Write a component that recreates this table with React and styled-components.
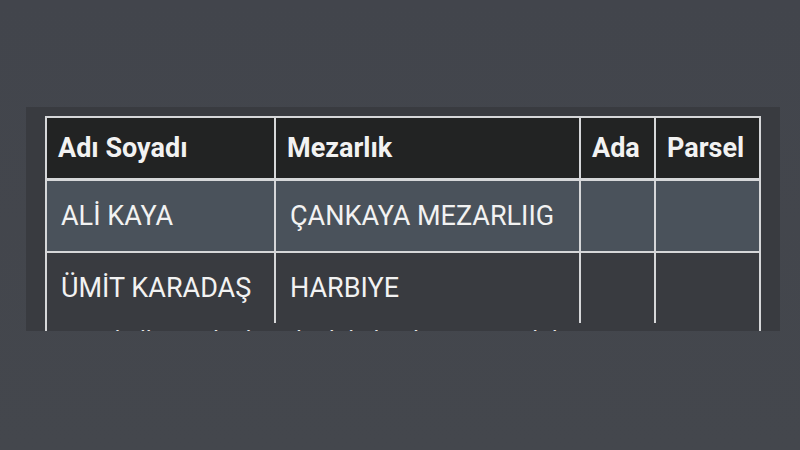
import React from "react";
import styled, { createGlobalStyle } from "styled-components";

const rows = [
  { name: "ALİ KAYA", cemetery: "ÇANKAYA MEZARLIIG", ada: "", parsel: "", highlight: true },
  { name: "ÜMİT KARADAŞ", cemetery: "HARBIYE", ada: "", parsel: "" },
];

export default function App() {
  return (
    <>
      <GlobalStyle />
      <Page>
        <Panel>
          <TableFrame>
            <Table>
              <colgroup>
                <col style={{ width: 228 }} />
                <col style={{ width: 305 }} />
                <col style={{ width: 75 }} />
                <col />
              </colgroup>
              <thead>
                <tr>
                  <Th>Adı Soyadı</Th>
                  <Th>Mezarlık</Th>
                  <Th>Ada</Th>
                  <Th>Parsel</Th>
                </tr>
              </thead>
              <tbody>
                {rows.map((r, i) => (
                  <Row key={i} $highlight={r.highlight} $divider={i > 0}>
                    <Td>{r.name}</Td>
                    <Td>{r.cemetery}</Td>
                    <Td>{r.ada}</Td>
                    <Td>{r.parsel}</Td>
                  </Row>
                ))}
              </tbody>
            </Table>
            <Note>Sayın kullanıcı, bu kayıtlar bilgilendirme amaçlıdır.</Note>
          </TableFrame>
        </Panel>
      </Page>
    </>
  );
}

const GlobalStyle = createGlobalStyle`
  html, body {
    margin: 0;
    padding: 0;
    background: #43464c;
  }
  body {
    font-family: Roboto, "Liberation Sans", sans-serif;
  }
`;

const Page = styled.div`
  width: 800px;
  height: 450px;
  box-sizing: border-box;
  padding-top: 107px;
  padding-left: 26px;
  background: linear-gradient(180deg, #42454c 0%, #44474d 100%);
`;

const Panel = styled.div`
  width: 754px;
  height: 224px;
  box-sizing: border-box;
  padding: 9px 19px 0;
  background: #393b40;
  overflow: hidden;
`;

const TableFrame = styled.div`
  border-left: 2px solid #d6d7d9;
  border-right: 2px solid #d6d7d9;
  height: 300px;
`;

const Table = styled.table`
  width: 100%;
  border-collapse: collapse;
  table-layout: fixed;
  color: #f2f2f2;
`;

const Th = styled.th`
  height: 60px;
  padding: 0 11px;
  text-align: left;
  font-size: 27px;
  font-weight: 700;
  background: #222323;
  border-top: 2px solid #d6d7d9;
  border-bottom: 3px solid #d6d7d9;
  white-space: nowrap;
  & + & {
    border-left: 2px solid #d6d7d9;
  }
`;

const Row = styled.tr`
  background: ${(p) => (p.$highlight ? "#4a525b" : "#393b40")};
  border-top: ${(p) => (p.$divider ? "2px solid #d6d7d9" : "none")};
`;

const Td = styled.td`
  height: 70px;
  padding: 0 14px;
  font-size: 27px;
  font-weight: 400;
  white-space: nowrap;
  & + & {
    border-left: 2px solid #d6d7d9;
  }
`;

const Note = styled.p`
  margin: 3px 0 0;
  padding-left: 4px;
  font-size: 24px;
  line-height: 28px;
  color: #e6e6e6;
`;
